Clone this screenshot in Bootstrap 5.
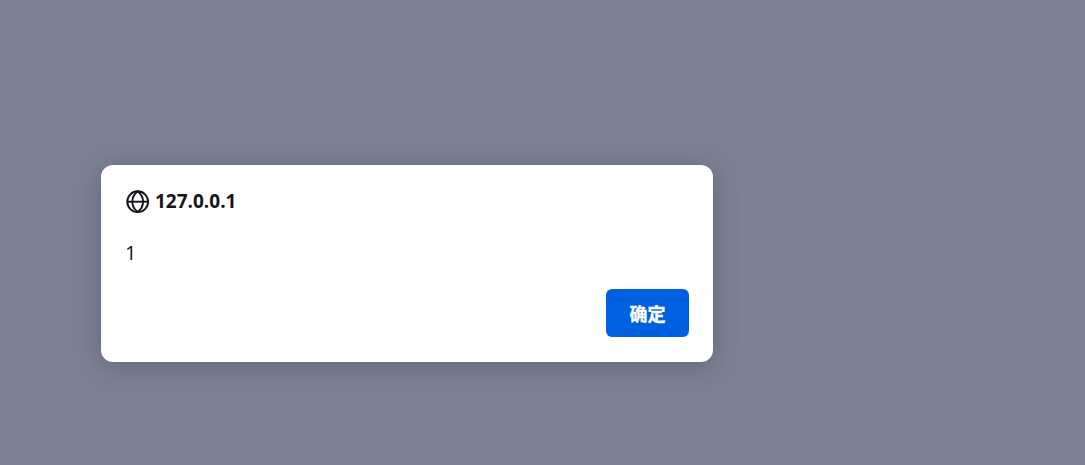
<!DOCTYPE html>
<html lang="zh-CN">
<head>
    <meta charset="UTF-8">
    <meta name="viewport" content="width=device-width, initial-scale=1.0">
    <title>127.0.0.1</title>
    <!-- Bootstrap CSS -->
    <link href="https://cdn.jsdelivr.net/npm/bootstrap@5.3.0/dist/css/bootstrap.min.css" rel="stylesheet">
    <style>
        body {
            background-color: #7c8194;
            color: #15141a;
            font-family: "Open Sans", "Noto Sans", "Noto Sans CJK SC", sans-serif;
            padding: 165px 0 0 101px;
        }
        .alert-dialog {
            width: 612px;
            height: 197px;
            padding: 24px 24px 25px;
            border: 0;
            border-radius: 12px;
            color: #15141a;
            box-shadow: 0 4px 26px rgba(58, 66, 78, .4);
        }
        .dialog-title {
            gap: 5px;
            height: 25px;
            font-size: 19px;
            line-height: 25px;
        }
        .dialog-title svg {
            margin-left: 1px;
        }
        .dialog-text {
            margin-top: 26px;
            font-size: 20px;
            line-height: 25px;
        }
        .btn-ok {
            --bs-btn-color: #fbfbfe;
            --bs-btn-bg: #0061e0;
            --bs-btn-hover-color: #fbfbfe;
            --bs-btn-hover-bg: #0250bb;
            --bs-btn-active-color: #fbfbfe;
            --bs-btn-active-bg: #053e94;
            width: 83px;
            height: 48px;
            padding: 0;
            border: 0;
            border-radius: 6px;
            font-family: "Noto Sans CJK SC", sans-serif;
            font-size: 18px;
            line-height: 47px;
            -webkit-text-stroke: .4px #fbfbfe;
        }
    </style>
</head>
<body class="min-vh-100">
    <div class="card alert-dialog" role="alertdialog" aria-labelledby="title" aria-describedby="message">
        <div class="dialog-title d-flex align-items-center fw-bold">
            <!-- Globe icon -->
            <svg width="24" height="24" viewBox="0 0 24 24" fill="none" stroke="#15141a" stroke-width="1.9" aria-hidden="true">
                <circle cx="11.7" cy="11.7" r="10.4"/>
                <path d="M11.7 1.3C4.5 7 4.5 16.4 11.7 22.1C18.9 16.4 18.9 7 11.7 1.3z"/>
                <path d="M1.3 11.7h20.8"/>
            </svg>
            <span id="title">127.0.0.1</span>
        </div>
        <div class="dialog-text" id="message">1</div>
        <div class="d-flex justify-content-end mt-auto">
            <button type="button" class="btn btn-ok fw-bold">确定</button>
        </div>
    </div>

    <!-- Bootstrap JS -->
    <script src="https://cdn.jsdelivr.net/npm/bootstrap@5.3.0/dist/js/bootstrap.bundle.min.js"></script>
</body>
</html>
